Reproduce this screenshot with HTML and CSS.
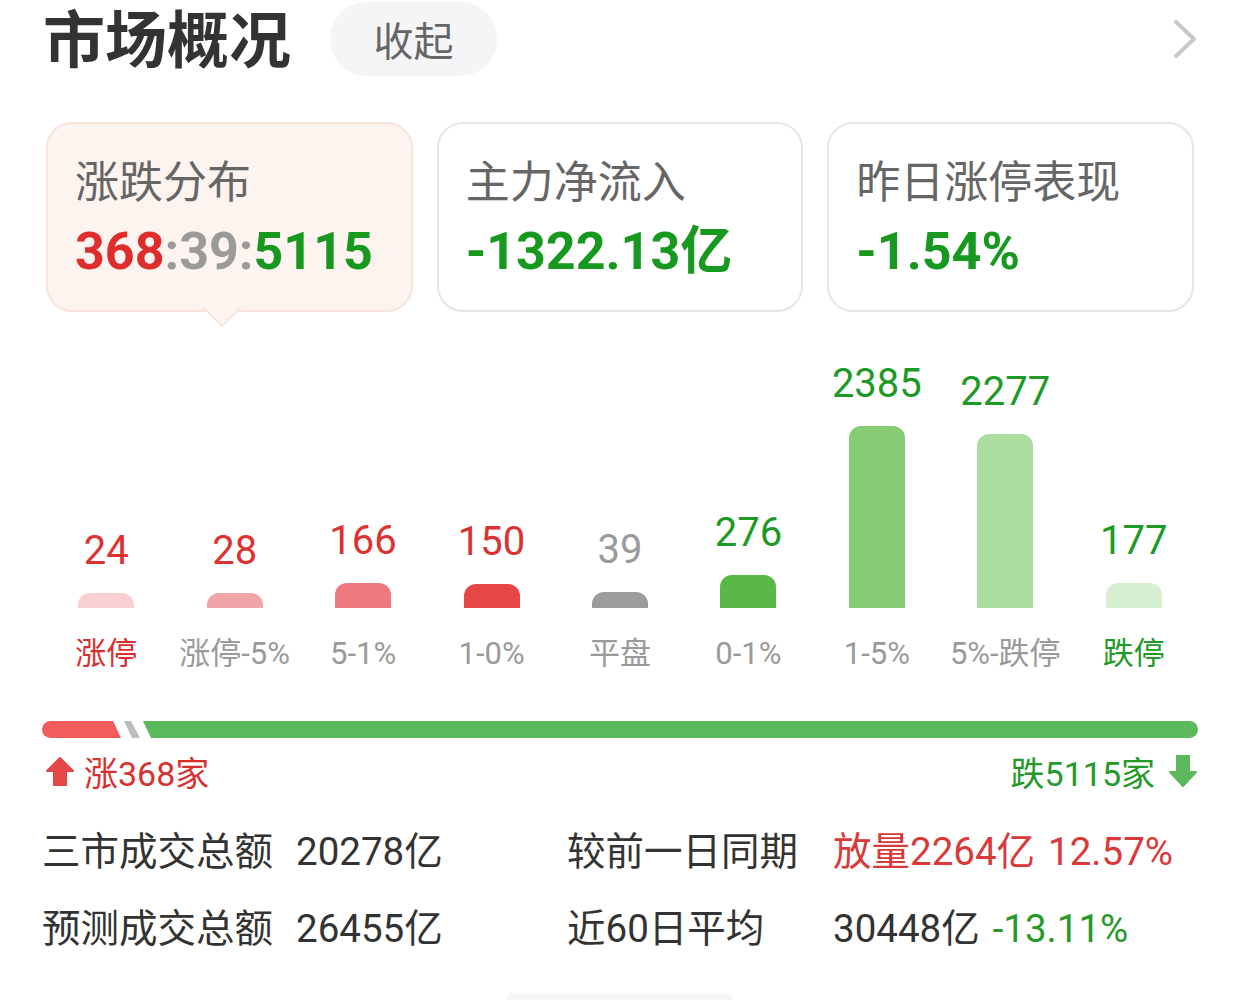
FILE: index.html
```html
<!DOCTYPE html>
<html lang="zh-CN">
<head>
  <meta charset="UTF-8" />
  <title>市场概况</title>
  <link rel="stylesheet" href="styles.css">
</head>
<body>
  <div class="page">
    <header class="top">
      <h1>市场概况</h1>
      <div class="fold">收起</div>
      <svg class="more" width="26" height="42" viewBox="0 0 26 42">
        <polyline points="4,4 22,21 4,38" fill="none" stroke="#c9c9c9" stroke-width="4" stroke-linecap="round" stroke-linejoin="round" />
      </svg>
    </header>

    <!-- Cartes de synthèse -->
    <section class="cards">
      <div class="card active">
        <div class="card-title">涨跌分布</div>
        <div class="card-value"><span class="red">368</span><span class="gray">:39:</span><span class="green">5115</span></div>
      </div>
      <div class="card">
        <div class="card-title">主力净流入</div>
        <div class="card-value green">-1322.13亿</div>
      </div>
      <div class="card">
        <div class="card-title">昨日涨停表现</div>
        <div class="card-value green">-1.54%</div>
      </div>
    </section>

    <!-- Répartition des variations -->
    <section class="chart">
      <div class="col"><span class="num red">24</span><div class="bar c1" style="height:15px"></div></div>
      <div class="col"><span class="num red">28</span><div class="bar c2" style="height:15px"></div></div>
      <div class="col"><span class="num red">166</span><div class="bar c3" style="height:25px"></div></div>
      <div class="col"><span class="num red">150</span><div class="bar c4" style="height:24px"></div></div>
      <div class="col"><span class="num gray">39</span><div class="bar c5" style="height:16px"></div></div>
      <div class="col"><span class="num green">276</span><div class="bar c6" style="height:33px"></div></div>
      <div class="col"><span class="num green">2385</span><div class="bar c7" style="height:182px"></div></div>
      <div class="col"><span class="num green">2277</span><div class="bar c8" style="height:174px"></div></div>
      <div class="col"><span class="num green">177</span><div class="bar c9" style="height:25px"></div></div>
    </section>
    <div class="axis">
      <span class="red">涨停</span>
      <span>涨停-5%</span>
      <span>5-1%</span>
      <span>1-0%</span>
      <span>平盘</span>
      <span>0-1%</span>
      <span>1-5%</span>
      <span>5%-跌停</span>
      <span class="green">跌停</span>
    </div>

    <div class="ratio">
      <div class="seg-up"></div>
      <div class="seg-flat"></div>
      <div class="seg-down"></div>
    </div>

    <div class="counts">
      <div class="rise">
        <svg width="30" height="31" viewBox="0 0 30 31">
          <path d="M15 2 L28 15 H21 V29 H9 V15 H2 Z" fill="#e54646" stroke="#e54646" stroke-width="2" stroke-linejoin="round" />
        </svg>
        <span>涨368家</span>
      </div>
      <div class="fall">
        <span>跌5115家</span>
        <svg width="30" height="34" viewBox="0 0 30 34">
          <path d="M9 2 H21 V18 H28 L15 32 L2 18 H9 Z" fill="#5cb85c" stroke="#5cb85c" stroke-width="2" stroke-linejoin="round" />
        </svg>
      </div>
    </div>

    <!-- Volumes -->
    <section class="stats">
      <span>三市成交总额</span>
      <span>20278亿</span>
      <span>较前一日同期</span>
      <span class="red-soft">放量2264亿<em>12.57%</em></span>
      <span>预测成交总额</span>
      <span>26455亿</span>
      <span>近60日平均</span>
      <span>30448亿<em class="green-soft">-13.11%</em></span>
    </section>

    <div class="handle"></div>
  </div>
</body>
</html>
```

FILE: styles.css
```css
html,
body {
  margin: 0;
  padding: 0;
  overflow: hidden;
}
body {
  font-family: Roboto, "Noto Sans CJK SC", sans-serif;
  background: #fff;
  color: #333;
}
.page {
  padding: 0 42px;
}

/* En-tête */
.top {
  display: flex;
  align-items: center;
  height: 78px;
}
.top h1 {
  margin: 6px 0 0 1px;
  font-size: 62px;
  font-weight: 700;
  line-height: 1;
  color: #333;
}
.fold {
  margin-left: 39px;
  width: 167px;
  height: 74px;
  border-radius: 37px;
  background: #f5f5f7;
  color: #666;
  font-size: 40px;
  display: flex;
  align-items: center;
  justify-content: center;
}
.more {
  margin-left: auto;
}

/* Cartes */
.cards {
  display: flex;
  gap: 24px;
  margin: 44px 4px 0;
}
.card {
  position: relative;
  flex: 1;
  height: 190px;
  box-sizing: border-box;
  border: 2px solid #e6e6e6;
  border-radius: 26px;
  padding: 34px 0 0 27px;
  background: #fff;
}
.card.active {
  background: #fdf4f0;
  border-color: #f8e4db;
}
.card.active::after {
  content: '';
  position: absolute;
  left: 174px;
  bottom: -12px;
  width: 28px;
  height: 28px;
  margin-left: -14px;
  background: #fdf4f0;
  border-right: 2px solid #f8e4db;
  border-bottom: 2px solid #f8e4db;
  border-bottom-right-radius: 4px;
  box-sizing: border-box;
  transform: rotate(45deg);
}
.card-title {
  font-size: 44px;
  line-height: 50px;
  color: #666;
}
.card-value {
  margin-top: 14px;
  font-size: 52px;
  line-height: 60px;
  font-weight: 700;
}

.red { color: #df2c2c; }
.gray { color: #9a9a9a; }
.green { color: #17991f; }

/* Graphique */
.chart {
  display: flex;
  align-items: flex-end;
  height: 296px;
}
.col {
  flex: 1;
  display: flex;
  flex-direction: column;
  align-items: center;
}
.num {
  font-size: 40px;
  line-height: 40px;
  margin-bottom: 22px;
}
.num.red { color: #dc3232; }
.num.green { color: #1d9a26; }
.bar {
  width: 56px;
  border-radius: 12px 12px 0 0;
}
.c1 { background: #f8d0d1; }
.c2 { background: #f0a5a9; }
.c3 { background: #ef7a7d; }
.c4 { background: #e84747; }
.c5 { background: #9c9c9c; }
.c6 { background: #5ab946; }
.c7 { background: #85cc75; }
.c8 { background: #acdda1; }
.c9 { background: #d6efd1; }

.axis {
  display: flex;
  margin-top: 26px;
}
.axis span {
  flex: 1;
  text-align: center;
  font-size: 31px;
  line-height: 40px;
  color: #9a9a9a;
}
.axis span.red { color: #d8302f; }
.axis span.green { color: #1f9a28; }

/* Barre de ratio */
.ratio {
  display: flex;
  height: 17px;
  margin-top: 47px;
}
.seg-up {
  width: 79px;
  background: #f25c5c;
  border-radius: 9px 0 0 9px;
  clip-path: polygon(0 0, calc(100% - 8px) 0, 100% 100%, 0 100%);
}
.seg-flat {
  width: 16px;
  margin-left: 3px;
  background: #bdbdbd;
  clip-path: polygon(0 0, 7px 0, 100% 100%, 8px 100%);
}
.seg-down {
  flex: 1;
  margin-left: 3px;
  background: #5cb85c;
  border-radius: 0 9px 9px 0;
  clip-path: polygon(0 0, 100% 0, 100% 100%, 8px 100%);
}

.counts {
  display: flex;
  justify-content: space-between;
  align-items: center;
  height: 40px;
  margin-top: 13px;
  font-size: 34px;
}
.rise {
  display: flex;
  align-items: center;
  gap: 9px;
  margin-left: 3px;
  color: #d8302f;
}
.fall {
  display: flex;
  align-items: center;
  gap: 13px;
  color: #25992b;
}

/* Volumes */
.stats {
  display: grid;
  grid-template-columns: 254px 271px 266px auto;
  margin-top: 22px;
  font-size: 38.5px;
  line-height: 77px;
  color: #333;
}
.stats em {
  font-style: normal;
  margin-left: 13px;
}
.red-soft { color: #d83a3a; }
.green-soft { color: #26992a; }

.handle {
  width: 228px;
  height: 12px;
  margin: 27px auto 0;
  background: #f6f6f6;
  border-radius: 8px 8px 0 0;
  box-shadow: 0 -1px 2px rgba(0, 0, 0, 0.03);
}
```
